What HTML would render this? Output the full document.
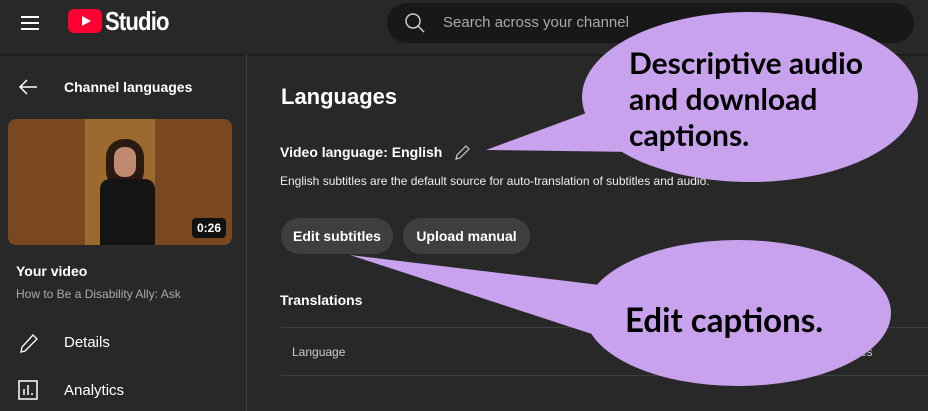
<!DOCTYPE html>
<html><head><meta charset="utf-8"><style>
*{margin:0;padding:0;box-sizing:border-box}
body{width:928px;height:411px;overflow:hidden;background:#282828;font-family:"Liberation Sans",Arial,sans-serif;color:#fff;position:relative}
.abs{position:absolute}
.hdr{left:0;top:0;width:928px;height:54px;background:#282828;box-shadow:0 1px 2px rgba(0,0,0,.5)}
.side{left:0;top:54px;width:247px;height:357px;border-right:1px solid #3e3e3e}
.btn{height:36px;border-radius:18px;background:#3f3f3f;font-weight:bold;font-size:14px;line-height:36px;text-align:center}
.bub{font-family:"Lato","Liberation Sans",sans-serif;font-weight:bold;color:#000}
</style></head><body>
<div class="abs hdr"></div>
<div class="abs" style="left:21px;top:16px;width:18px;height:2px;background:#fff"></div>
<div class="abs" style="left:21px;top:22px;width:18px;height:2px;background:#fff"></div>
<div class="abs" style="left:21px;top:28px;width:18px;height:2px;background:#fff"></div>
<div class="abs" style="left:68px;top:9px;width:34px;height:24px;background:#ff0033;border-radius:6px"></div>
<svg class="abs" style="left:80px;top:15px" width="12" height="12"><polygon points="2,1 11,6 2,11" fill="#fff"/></svg>
<div class="abs" style="left:105px;top:6px;font-size:26px;font-weight:bold;letter-spacing:-1px;transform:scaleX(.85);transform-origin:left">Studio</div>
<div class="abs" style="left:387px;top:3px;width:527px;height:40px;border-radius:20px;background:#181818"></div>
<svg class="abs" style="left:404px;top:12px" width="22" height="22"><circle cx="9" cy="9" r="7" fill="none" stroke="#ccc" stroke-width="1.5"/><line x1="14" y1="14" x2="20" y2="20" stroke="#ccc" stroke-width="1.5"/></svg>
<div class="abs" style="left:443px;top:14px;font-size:15px;color:#aaa">Search across your channel</div>
<div class="abs side"></div>
<svg class="abs" style="left:18px;top:78px" width="20" height="18"><path d="M19 9H2M9 2L2 9l7 7" fill="none" stroke="#fff" stroke-width="1.5"/></svg>
<div class="abs" style="left:64px;top:79px;font-size:14px;font-weight:bold">Channel languages</div>
<div class="abs" style="left:8px;top:119px;width:224px;height:126px;border-radius:8px;background:#7a4820;overflow:hidden">
<div class="abs" style="left:77px;top:0;width:70px;height:126px;background:#9c6a2e"></div>
<div class="abs" style="left:98px;top:20px;width:38px;height:50px;border-radius:18px;background:#2a1a12"></div>
<div class="abs" style="left:106px;top:28px;width:22px;height:30px;border-radius:10px;background:#c08a70"></div>
<div class="abs" style="left:92px;top:60px;width:55px;height:66px;border-radius:10px 10px 0 0;background:#141414"></div>
<div class="abs" style="left:184px;top:99px;width:34px;height:20px;border-radius:4px;background:#111;font-size:12px;font-weight:bold;line-height:20px;text-align:center">0:26</div>
</div>
<div class="abs" style="left:16px;top:263px;font-size:14px;font-weight:bold">Your video</div>
<div class="abs" style="left:16px;top:287px;font-size:12px;color:#aaa">How to Be a Disability Ally: Ask</div>
<svg class="abs" style="left:18px;top:332px" width="22" height="22"><path d="M3 20l1-5L15 3l4 4L7 19z" fill="none" stroke="#fff" stroke-width="1.3"/></svg>
<div class="abs" style="left:64px;top:334px;font-size:15px">Details</div>
<svg class="abs" style="left:18px;top:380px" width="20" height="20"><rect x="1" y="1" width="18" height="18" fill="none" stroke="#fff" stroke-width="1.5"/><path d="M6 15V9M10 15V5M14 15v-2" stroke="#fff" stroke-width="1.5"/></svg>
<div class="abs" style="left:64px;top:382px;font-size:15px">Analytics</div>
<div class="abs" style="left:281px;top:84px;font-size:22px;font-weight:bold">Languages</div>
<div class="abs" style="left:280px;top:144px;font-size:14px;font-weight:bold">Video language: English</div>
<svg class="abs" style="left:454px;top:143px" width="18" height="18"><path d="M2 16l1-4 9-9 3 3-9 9z" fill="none" stroke="#ccc" stroke-width="1.2"/></svg>
<div class="abs" style="left:280px;top:174px;font-size:12px;color:#eee">English subtitles are the default source for auto-translation of subtitles and audio.</div>
<div class="abs btn" style="left:281px;top:218px;width:112px">Edit subtitles</div>
<div class="abs btn" style="left:403px;top:218px;width:127px">Upload manual</div>
<div class="abs" style="left:280px;top:292px;font-size:14px;font-weight:bold">Translations</div>
<div class="abs" style="left:281px;top:327px;width:647px;height:1px;background:#3e3e3e"></div>
<div class="abs" style="left:292px;top:345px;font-size:12px;color:#ccc">Language</div>
<div class="abs" style="left:860px;top:345px;font-size:12px;color:#ccc">es</div>
<div class="abs" style="left:281px;top:375px;width:647px;height:1px;background:#3e3e3e"></div>
<svg class="abs" style="left:0;top:0" width="928" height="411">
<g fill="#c8a2ec">
<ellipse cx="750" cy="97" rx="168" ry="85"/>
<polygon points="486,150 600,108 640,152"/>
<ellipse cx="738" cy="313" rx="153" ry="73"/>
<polygon points="350,255 600,285 595,335"/>
</g>
</svg>
<div class="abs bub" style="left:629px;top:45px;font-size:30px;line-height:36px">Descriptive audio<br>and download<br>captions.</div>
<div class="abs bub" style="left:625px;top:301px;font-size:33px;line-height:38px">Edit captions.</div>
</body></html>
